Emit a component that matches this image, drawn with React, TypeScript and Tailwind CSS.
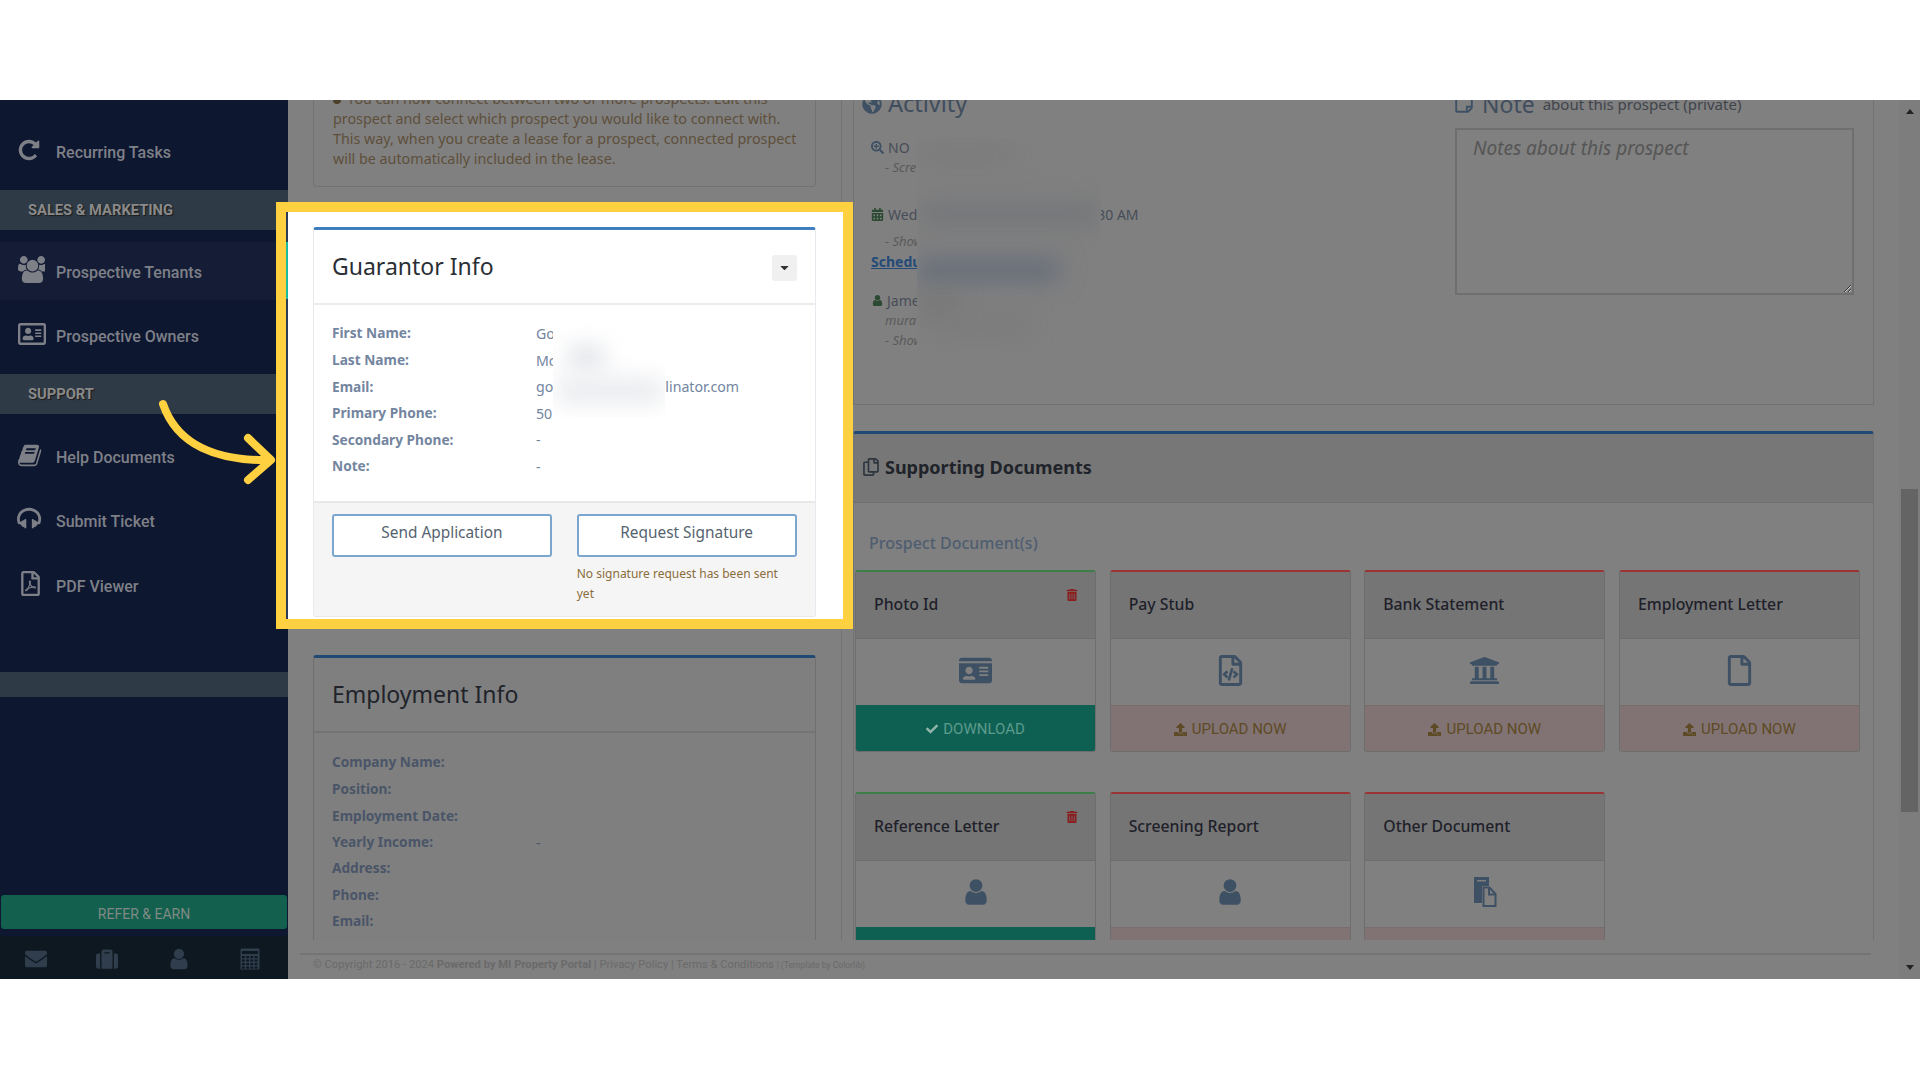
import type { ReactNode } from "react";
import {
  FaCalendarAlt,
  FaCaretDown,
  FaCheck,
  FaEnvelope,
  FaGlobeAmericas,
  FaIdCard,
  FaRegAddressCard,
  FaRegCopy,
  FaRegFile,
  FaRegFileCode,
  FaRegFilePdf,
  FaRegStickyNote,
  FaSearchPlus,
  FaSuitcase,
  FaTrashAlt,
  FaUniversity,
  FaUpload,
} from "react-icons/fa";

const body = "font-['Noto_Sans',sans-serif]";
const roboto = "font-['Roboto',sans-serif]";

// the older glyphs the site uses, on their 1792 grid
const glyphs = {
  repeat:
    "M1664 256v448q0 26-19 45t-45 19h-448q-42 0-59-40-17-39 14-69l138-138q-148-137-349-137-104 0-198.500 40.500t-163.500 109.500-109.500 163.500-40.500 198.500 40.500 198.500 109.500 163.500 163.500 109.500 198.500 40.500q119 0 225-52t179-147q7-10 23-12 15 0 25 9l137 138q9 8 9.500 20.500t-7.500 22.500q-109 132-264 204.500t-327 72.500q-156 0-298-61t-245-164-164-245-61-298 61-298 164-245 245-164 298-61q147 0 284.500 55.500t244.500 156.500l130-129q29-31 70-14 39 17 39 59z",
  users:
    "M593 896q-162 5-265 128h-134q-82 0-138-40.500t-56-118.500q0-353 124-353 6 0 43.500 21t97.500 42.500 119 21.500q67 0 133-23-5 37-5 66 0 139 81 256zm1071 637q0 120-73 189.500t-194 69.500h-874q-121 0-194-69.500t-73-189.500q0-53 3.500-103.500t14-109 26.500-108.500 43-97.500 62-81 85.500-53.500 111.500-20q10 0 43 21.500t73 48 107 48 135 21.500 135-21.500 107-48 73-48 43-21.500q61 0 111.500 20t85.500 53.500 62 81 43 97.500 26.500 108.500 14 109 3.500 103.500zm-1024-1277q0 106-75 181t-181 75-181-75-75-181 75-181 181-75 181 75 75 181zm704 384q0 159-112.500 271.500t-271.500 112.500-271.500-112.500-112.500-271.500 112.500-271.500 271.500-112.500 271.500 112.500 112.500 271.500zm576 225q0 78-56 118.500t-138 40.500h-134q-103-123-265-128 81-117 81-256 0-29-5-66 66 23 133 23 59 0 119-21.500t97.500-42.500 43.500-21q124 0 124 353zm-128-609q0 106-75 181t-181 75-181-75-75-181 75-181 181-75 181 75 75 181z",
  user:
    "M1536 1399q0 109-62.500 187t-150.500 78h-854q-88 0-150.500-78t-62.500-187q0-85 8.500-160.500t31.500-152 58.500-131 94-89 134.500-34.500q131 128 313 128t313-128q76 0 134.500 34.500t94 89 58.500 131 31.500 152 8.500 160.500zm-256-887q0 159-112.500 271.500t-271.500 112.500-271.500-112.500-112.500-271.500 112.500-271.500 271.500-112.500 271.500 112.500 112.500 271.500z",
  book:
    "M1639 478q40 57 18 129l-275 906q-19 64-76.500 107.500t-122.500 43.500h-923q-77 0-148.500-53.500t-99.500-131.500q-24-67-2-127 0-4 3-27t4-37q1-8-3-21.500t-3-19.500q2-11 8-21t16.500-23.500 16.500-23.500q23-38 45-91.500t30-91.500q3-10 .5-30t-.5-28q3-11 17-28t17-23q21-36 42-92t25-90q1-9-2.500-32t.5-28q4-13 22-30.500t22-22.500q19-26 42.500-84.500t27.500-96.500q1-8-3-25.500t-2-26.500q2-8 9-18t18-23 17-21q8-12 16.500-30.500t15-35 16-36 19.500-32 26.500-23.500 36-11.500 47.500 5.500l-1 3q38-9 51-9h761q74 0 114 56t18 130l-274 906q-36 119-71.500 153.500t-128.500 34.500h-869q-27 0-38 15-11 16-1 43 24 70 144 70h923q29 0 56-15.500t35-41.500l300-987q7-22 5-57 38 15 59 43zm-1064 2q-4 13 2 22.500t20 9.500h608q13 0 25.500-9.500t16.500-22.500l21-64q4-13-2-22.500t-20-9.500h-608q-13 0-25.500 9.500t-16.500 22.500zm-83 256q-4 13 2 22.500t20 9.500h608q13 0 25.500-9.500t16.500-22.500l21-64q4-13-2-22.500t-20-9.500h-608q-13 0-25.500 9.500t-16.500 22.500z",
  headphones:
    "M1664 886q0 166-60 314l-20 49-185 33q-22 83-90.500 136.500t-156.500 53.500v32q0 14-9 23t-23 9h-64q-14 0-23-9t-9-23v-576q0-14 9-23t23-9h64q14 0 23 9t9 23v32q71 0 130 35.500t93 95.500l68-12q29-95 29-193 0-148-88-279t-236.500-209-315.500-78-315.500 78-236.500 209-88 279q0 98 29 193l68 12q34-60 93-95.500t130-35.500v-32q0-14 9-23t23-9h64q14 0 23 9t9 23v576q0 14-9 23t-23 9h-64q-14 0-23-9t-9-23v-32q-88 0-156.500-53.500t-90.500-136.500l-185-33-20-49q-60-148-60-314 0-151 67-291t179-242.500 266-163.500 320-61 320 61 266 163.500 179 242.500 67 291z",
};

function Glyph({ d, size, className }: { d: string; size: number; className?: string }) {
  return (
    <svg width={size} height={size} viewBox="0 0 1792 1792" fill="currentColor" className={className}>
      <path d={d} />
    </svg>
  );
}

function OtherDocIcon() {
  return (
    <svg width="24" height="30" viewBox="0 0 24 30">
      <path d="M1 0h15v9H9v17H1z" fill="#3e5064" />
      <rect x="4" y="3" width="9" height="1.5" fill="#7f7f7f" />
      <path d="M10.5 10.5h6l6 6.5v12h-12z" fill="none" stroke="#3e5064" strokeWidth="2" />
      <path d="M16 10.5v7h6.5" fill="none" stroke="#3e5064" strokeWidth="2" />
    </svg>
  );
}

function GridCalcIcon() {
  const cells = [9, 12.5, 16, 19.5];
  return (
    <svg width="20" height="22" viewBox="0 0 20 22">
      <rect x="0.5" y="0.5" width="19" height="21" rx="1" fill="#2f3d4d" />
      <rect x="2" y="3" width="16" height="3" fill="#0e1820" />
      {cells.map((y) =>
        [2, 6.2, 10.4, 14.6].map((x) => (
          <rect key={`${x}-${y}`} x={x} y={y - 1} width="2.8" height="2.2" fill="#0e1820" />
        ))
      )}
    </svg>
  );
}

function NavRow({ icon, label, className }: { icon: ReactNode; label: string; className: string }) {
  return (
    <div className={`flex items-center pl-[18px] text-[#7e8088] ${className}`}>
      <span className="w-[38px] mb-[6px]">{icon}</span>
      <span className={`${roboto} text-[16px] font-medium`}>{label}</span>
    </div>
  );
}

function SideHeader({ label }: { label: string }) {
  return (
    <div className="h-[40px] shrink-0 bg-[#2e3a45] pl-[28px] flex items-center">
      <span className={`${roboto} text-[14.7px] font-bold text-[#8a8a8a] [text-shadow:1px_1px_1px_#1a1a1a]`}>{label}</span>
    </div>
  );
}

function Sidebar() {
  return (
    <aside className="w-[288px] shrink-0 bg-[#0e1730] flex flex-col">
      <NavRow className="h-[90px] pt-[16px]" icon={<Glyph d={glyphs.repeat} size={24} className="-ml-[1px]" />} label="Recurring Tasks" />
      <SideHeader label="SALES & MARKETING" />
      <NavRow className="h-[58px] mt-[12px] pt-[3px] bg-[#141d35]" icon={<Glyph d={glyphs.users} size={27} />} label="Prospective Tenants" />
      <NavRow className="h-[74px]" icon={<FaRegAddressCard size={28} />} label="Prospective Owners" />
      <SideHeader label="SUPPORT" />
      <NavRow className="h-[64px] mt-[12px]" icon={<Glyph d={glyphs.book} size={25} />} label="Help Documents" />
      <NavRow className="h-[64px]" icon={<Glyph d={glyphs.headphones} size={26} className="-ml-[1px]" />} label="Submit Ticket" />
      <NavRow className="h-[65px]" icon={<FaRegFilePdf size={25} />} label="PDF Viewer" />
      <div className="h-[25px] mt-[53px] shrink-0 bg-[#2e3a45]" />
      <div className="flex-1" />
      <div className={`${roboto} mx-[1px] h-[34px] pt-[4px] rounded-[3px] bg-[#14604f] flex items-center justify-center text-[14px] text-[#7f8a84]`}>
        REFER &amp; EARN
      </div>
      <div className="h-[43px] mt-[7px] pt-[3px] bg-[#0e1820] grid grid-cols-4 pr-[2px] items-center justify-items-center text-[#2f3d4d]">
        <FaEnvelope size={22} />
        <FaSuitcase size={22} />
        <Glyph d={glyphs.user} size={24} />
        <GridCalcIcon />
      </div>
    </aside>
  );
}

function InfoRow({ label, children, h }: { label: string; children?: ReactNode; h: string }) {
  return (
    <div className={`flex items-center ${h}`}>
      <span className="w-[204px] text-[13.7px] font-bold">{label}</span>
      <span className="flex items-center">{children}</span>
    </div>
  );
}

function GuarantorCard() {
  return (
    <div className={`${body} relative z-20 h-[390px] mt-[40px] bg-white border border-[#e6e9ed] border-t-[3px] border-t-[#3f7fc0] rounded-[3px] flex flex-col`}>
      <div className="h-[75px] shrink-0 border-b-2 border-[#ececec] px-[18px] flex items-center justify-between">
        <span className="text-[23px] text-[#2a2f36]">Guarantor Info</span>
        <span className="w-[25px] h-[26px] mt-[2px] rounded-[3px] bg-[#f0f0f0] flex items-center justify-center text-[#333]">
          <FaCaretDown size={13} />
        </span>
      </div>
      <div className="flex-1 relative px-[18px] pt-[15px] text-[14.2px] text-[#73859f]">
        <InfoRow h="h-[27px]" label="First Name:">Go</InfoRow>
        <InfoRow h="h-[27px]" label="Last Name:">Mc</InfoRow>
        <InfoRow h="h-[26px]" label="Email:">
          go<span className="w-[112px]" />linator.com
        </InfoRow>
        <InfoRow h="h-[27px]" label="Primary Phone:">50</InfoRow>
        <InfoRow h="h-[26px]" label="Secondary Phone:">-</InfoRow>
        <InfoRow h="h-[27px]" label="Note:">-</InfoRow>
        {/* redacted values */}
        <div className="absolute left-[239px] top-[14px] w-[112px] h-[98px] overflow-hidden bg-white">
          <div className="absolute left-[16px] top-[30px] w-[34px] h-[16px] bg-gray-300 blur-md" />
          <div className="absolute left-[4px] top-[61px] w-[106px] h-[22px] bg-gray-200 blur-md" />
        </div>
      </div>
      <div className="h-[115px] shrink-0 bg-[#f5f5f5] border-t-2 border-[#e8e8e8] px-[18px] pt-[11px] grid grid-cols-2 gap-x-[25px] content-start">
        <button className="h-[43px] pb-[6px] rounded-[3px] border-2 border-[#7ba7cf] bg-white text-[15.4px] text-[#55636f]">Send Application</button>
        <button className="h-[43px] pb-[6px] rounded-[3px] border-2 border-[#7ba7cf] bg-white text-[15.4px] text-[#55636f]">Request Signature</button>
        <span />
        <p className="mt-[7px] text-[12px] leading-[20px] text-[#8a6d3b]">No signature request has been sent yet</p>
      </div>
    </div>
  );
}

function EmploymentCard() {
  return (
    <div className="h-[400px] mt-[38px] bg-[#7f7f7f] border border-[#6f6f6f] border-t-[3px] border-t-[#1f4a75] rounded-[3px]">
      <div className="h-[75px] border-b-2 border-[#747474] px-[18px] flex items-center">
        <span className="text-[23px] text-[#20232a]">Employment Info</span>
      </div>
      <div className="px-[18px] pt-[16px] text-[14px] text-[#4a5568]">
        <InfoRow h="h-[27px]" label="Company Name:" />
        <InfoRow h="h-[27px]" label="Position:" />
        <InfoRow h="h-[26px]" label="Employment Date:" />
        <InfoRow h="h-[26px]" label="Yearly Income:">-</InfoRow>
        <InfoRow h="h-[27px]" label="Address:" />
        <InfoRow h="h-[26px]" label="Phone:" />
        <InfoRow h="h-[27px]" label="Email:" />
      </div>
    </div>
  );
}

function LeftColumn() {
  return (
    <div className={`${body} w-[554px] shrink-0 border-r border-[#727272] pl-[25px] pr-[25.5px]`}>
      <div className="h-[127px] -mt-[40px] border border-[#727272] rounded-[3px] pl-[19px] pr-[15px] pt-[28px] text-[14.3px] leading-[20px] text-[#5e4f3a]">
        <span className="inline-block w-[8px] h-[8px] mr-[6px] rounded-full bg-[#4d4028]" />
        You can now connect between two or more prospects. Edit this prospect and select which prospect you would like to connect with.
        This way, when you create a lease for a prospect, connected prospect will be automatically included in the lease.
      </div>
      <GuarantorCard />
      <EmploymentCard />
    </div>
  );
}

function ActivityLine({ className, children }: { className?: string; children: ReactNode }) {
  return <div className={`h-[20px] flex items-center whitespace-nowrap ${className ?? ""}`}>{children}</div>;
}

function ActivityPanel() {
  return (
    <div className="h-[325px] -mt-[20px] border border-t-0 border-[#727272] flex">
      <div className="w-[601px] shrink-0 relative pl-[8px]">
        <div className="h-[40px] pt-[8px] flex items-center text-[23.5px] text-[#3f4d5e]">
          <FaGlobeAmericas size={20} className="mr-[6px] text-[#3e5064]" />
          Activity
        </div>
        <div className="pl-[9px] text-[14px] text-[#474d58]">
          <ActivityLine className="mt-[17px]">
            <FaSearchPlus size={13} className="mr-[4px] text-[#3e5064]" />
            NO
          </ActivityLine>
          <ActivityLine className="mt-[1px] pl-[14px] italic text-[#5a5a5a] text-[13px]">- Scre</ActivityLine>
          <ActivityLine className="mt-[26px]">
            <FaCalendarAlt size={13} className="mr-[4px] text-[#2c4a32]" />
            Wed<span className="ml-[180px]">30 AM</span>
          </ActivityLine>
          <ActivityLine className="mt-[8px] pl-[14px] italic text-[#5a5a5a] text-[13px]">- Show</ActivityLine>
          <ActivityLine className="-mt-[1px] font-bold text-[#234a78] underline">Schedu</ActivityLine>
          <ActivityLine className="mt-[19px]">
            <Glyph d={glyphs.user} size={13} className="mr-[3px] text-[#2c4a32]" />
            Jame
          </ActivityLine>
          <ActivityLine className="mt-[1px] pl-[14px] italic text-[#5a5a5a] text-[13px]">mura</ActivityLine>
          <ActivityLine className="pl-[14px] italic text-[#5a5a5a] text-[13px]">- Show</ActivityLine>
        </div>
        {/* redacted activity text */}
        <div className="absolute left-[63px] top-[58px] w-[184px] h-[262px] overflow-hidden bg-[#808080]">
          <div className="absolute left-[4px] top-[66px] w-[178px] h-[20px] bg-[#727478] blur-md" />
          <div className="absolute left-[4px] top-[8px] w-[90px] h-[16px] bg-[#7a7a7a] blur-md" />
          <div className="absolute left-[0px] top-[122px] w-[142px] h-[20px] bg-[#626a78] blur-md" />
          <div className="absolute left-[4px] top-[158px] w-[36px] h-[18px] bg-[#757575] blur-md" />
          <div className="absolute left-[20px] top-[178px] w-[90px] h-[16px] bg-[#7a7a7a] blur-md" />
        </div>
      </div>
      <div className="flex-1 min-w-0">
        <div className="h-[40px] pt-[8px] flex items-center text-[#3f4d5e]">
          <FaRegStickyNote size={20} className="-ml-[1px] mr-[8px] text-[#3e5064]" />
          <span className="text-[23px]">Note</span>
          <span className="ml-[8px] text-[15px] text-[#3f444c]">about this prospect (private)</span>
        </div>
        <textarea
          readOnly
          placeholder="Notes about this prospect"
          className="block w-[399px] h-[167px] mt-[8px] border-2 border-[#6f6f6f] bg-transparent px-[16px] py-[4px] text-[19px] placeholder:italic placeholder:text-[#555555] outline-none"
        />
      </div>
    </div>
  );
}

type Doc = { title: string; icon: ReactNode; uploaded?: boolean };

const docs: Doc[] = [
  { title: "Photo Id", icon: <FaIdCard size={33} />, uploaded: true },
  { title: "Pay Stub", icon: <FaRegFileCode size={31} /> },
  { title: "Bank Statement", icon: <FaUniversity size={31} /> },
  { title: "Employment Letter", icon: <FaRegFile size={31} /> },
  { title: "Reference Letter", icon: <Glyph d={glyphs.user} size={30} />, uploaded: true },
  { title: "Screening Report", icon: <Glyph d={glyphs.user} size={30} /> },
  { title: "Other Document", icon: <OtherDocIcon /> },
];

function DocCard({ doc }: { doc: Doc }) {
  return (
    <div className={`h-[182px] border border-[#6d6d6d] border-t-2 rounded-[3px] overflow-hidden flex flex-col ${doc.uploaded ? "border-t-[#3d7d48]" : "border-t-[#9a3434]"}`}>
      <div className="h-[67px] shrink-0 bg-[#757575] border-b border-[#6d6d6d] pl-[18px] pr-[18px] flex items-center justify-between">
        <span className="text-[15.8px] font-medium text-[#201f2a]">{doc.title}</span>
        {doc.uploaded && <FaTrashAlt size={12} className="mb-[20px] -mr-[1px] text-[#8a1c1c]" />}
      </div>
      <div className="h-[66px] shrink-0 pb-[4px] flex items-center justify-center text-[#3e5064]">{doc.icon}</div>
      {doc.uploaded ? (
        <div className={`${roboto} flex-1 pt-[2px] bg-[#0e6152] flex items-center justify-center gap-[5px] text-[15px] text-[#5d9a8d]`}>
          <FaCheck size={12} className="text-[#90b5ab]" />
          DOWNLOAD
        </div>
      ) : (
        <div className={`${roboto} flex-1 pt-[2px] bg-[#817373] border-t border-[#786c6c] flex items-center justify-center gap-[5px] text-[15px] text-[#5e4a24]`}>
          <FaUpload size={13} />
          UPLOAD NOW
        </div>
      )}
    </div>
  );
}

function DocumentsPanel() {
  return (
    <div className="h-[600px] mt-[26px] border border-[#727272] border-t-[3px] border-t-[#1f4a75] rounded-t-[3px]">
      <div className="h-[69px] pb-[2px] bg-[#777777] border-b border-[#6f6f6f] pl-[8px] flex items-center gap-[5px]">
        <FaRegCopy size={18} className="text-[#2e3640]" />
        <span className="text-[18px] font-bold text-[#20232a]">Supporting Documents</span>
      </div>
      <div className="pl-[1px] pt-[26px]">
        <div className="pl-[14px] h-[27px] flex items-center text-[16px] font-medium text-[#4f5d70]">Prospect Document(s)</div>
        <div className="w-[1005px] mt-[14px] grid grid-cols-4 gap-x-[13.5px] gap-y-[40px]">
          {docs.map((doc) => (
            <DocCard key={doc.title} doc={doc} />
          ))}
        </div>
      </div>
    </div>
  );
}

function Scrollbar() {
  return (
    <div className="w-[21px] shrink-0 bg-[#7d7d7d] flex flex-col items-center">
      <div className="h-[389px] w-full pt-[9px] flex justify-center">
        <div className="w-0 h-0 border-x-[4px] border-x-transparent border-b-[5px] border-b-[#222222]" />
      </div>
      <div className="w-[17px] h-[323px] bg-[#646464]" />
      <div className="flex-1" />
      <div className="w-0 h-0 mb-[9px] border-x-[4px] border-x-transparent border-t-[5px] border-t-[#222222]" />
    </div>
  );
}

export default function App() {
  return (
    <div className="relative w-[1920px] h-[1080px] overflow-hidden bg-white flex flex-col">
      <div className="h-[100px] shrink-0" />
      <div className="h-[879px] shrink-0 flex bg-[#808080]">
        <Sidebar />
        <div className="flex-1 min-w-0 flex flex-col">
          <div className="h-[840px] shrink-0 overflow-hidden flex">
            <LeftColumn />
            <div className={`${body} flex-1 min-w-0 pl-[11px] pr-[25px]`}>
              <ActivityPanel />
              <DocumentsPanel />
            </div>
          </div>
          <div className={`${roboto} ml-[12px] mr-[28px] mt-[13px] pt-[2px] border-t-2 border-[#747474] pl-[13px] text-[11.2px] text-[#6a6a6a] whitespace-nowrap`}>
            © Copyright 2016 - 2024 <b>Powered by MI Property Portal</b> | Privacy Policy | Terms &amp; Conditions <span className="text-[8.6px]">| (Template by Colorlib)</span>
          </div>
        </div>
        <Scrollbar />
      </div>

      {/* callout frame around the guarantor card */}
      <div className="absolute z-10 left-[276px] top-[202px] w-[577px] h-[427px] border-[10px] border-[#ffd040] bg-white">
        <div className="absolute left-0 top-0 bottom-0 w-[2px] bg-[#2b3a55]" />
        <div className="absolute left-0 top-[30px] w-[2px] h-[57px] bg-[#1abb9c]" />
      </div>
      <svg className="absolute z-30 left-[155px] top-[395px]" width="125" height="95" viewBox="0 0 125 95" fill="none">
        <path d="M8 9C22 50 62 66 114 65" stroke="#ffd040" strokeWidth="8" strokeLinecap="round" />
        <path d="M93 43L116 65L93 85" stroke="#ffd040" strokeWidth="8" strokeLinecap="round" strokeLinejoin="round" />
      </svg>
    </div>
  );
}
